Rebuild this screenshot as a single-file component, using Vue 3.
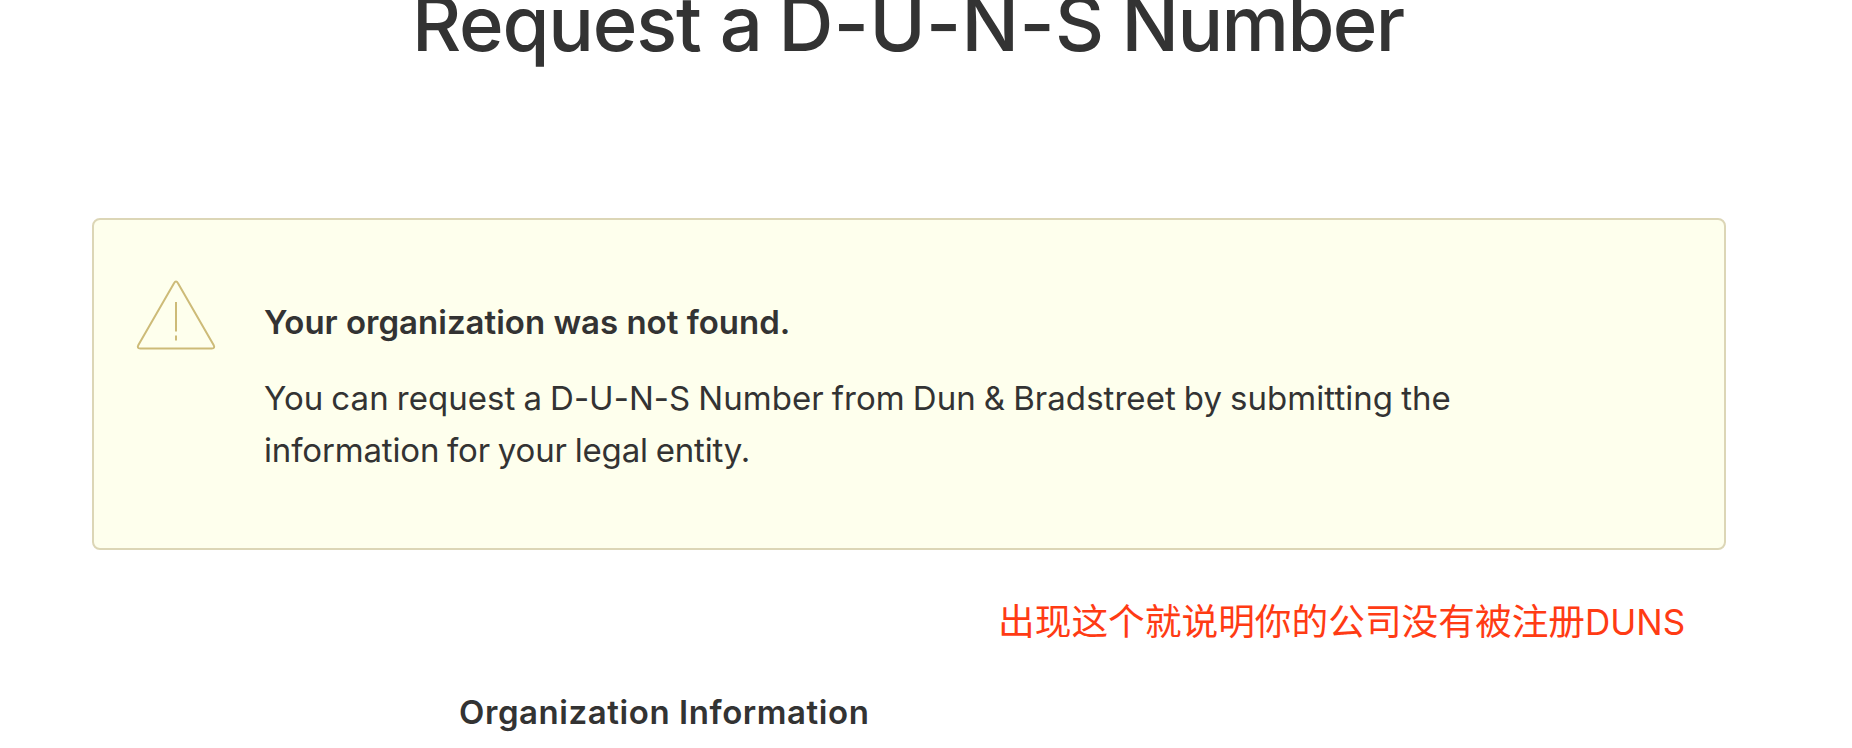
<template>
  <main class="page">
    <h1 class="title">
      <span class="title-verb">Request a</span>
      <span class="title-duns">D-U-N-S</span>
      <span class="title-noun">Number</span>
    </h1>

    <section class="alert">
      <svg class="alert-icon" viewBox="0 0 80 72" aria-hidden="true">
        <path
          d="M38 3.2Q40 0 42 3.2L77.6 65Q79.4 68.5 75.8 68.5H4.2Q0.6 68.5 2.4 65Z"
        />
        <path d="M40 22V51.5M40 55.5V60.5" />
      </svg>
      <div class="alert-text">
        <h2 class="alert-heading">{{ alert.heading }}</h2>
        <p v-for="line in alert.lines" :key="line" class="alert-line">
          {{ line }}
        </p>
      </div>
    </section>

    <p class="note"><span class="note-cjk">出现这个就说明你的公司没有被注册</span>DUNS</p>

    <h3 class="section-title">Organization Information</h3>
  </main>
</template>

<script setup>
const alert = {
  heading: "Your organization was not found.",
  lines: [
    "You can request a D-U-N-S Number from Dun & Bradstreet by submitting the",
    "information for your legal entity.",
  ],
};
</script>

<style>
body {
  margin: 0;
  background: #fff;
  overflow: hidden;
}
</style>

<style scoped>
.page {
  box-sizing: border-box;
  height: 748px;
  padding: 0 126px 0 92px;
  overflow: hidden;
  font-family: Inter, "Noto Sans CJK SC", sans-serif;
  color: #333;
}
h1,
h2,
h3,
p {
  margin: 0;
  white-space: nowrap;
}
.title {
  display: flex;
  gap: 17px;
  margin-top: -25px;
  padding-left: 320px;
  font-size: 76px;
  line-height: 96px;
  font-weight: 500;
}
.title-verb {
  letter-spacing: -1.2px;
}
.title-duns {
  letter-spacing: 0.4px;
}
.title-noun {
  letter-spacing: -1.6px;
}
.alert {
  box-sizing: border-box;
  display: flex;
  height: 332px;
  margin-top: 147px;
  padding: 60px 42px 0;
  border: 2px solid #dcd6b6;
  border-radius: 8px;
  background: #feffed;
}
.alert-icon {
  flex: none;
  width: 80px;
  height: 72px;
  fill: none;
  stroke: #cdbb78;
  stroke-width: 2;
}
.alert-text {
  padding: 16px 0 0 48px;
  font-size: 33px;
  line-height: 52px;
}
.alert-heading {
  margin-bottom: 24px;
  font-size: 33px;
  font-weight: 600;
}
.alert-line {
  letter-spacing: 0.05px;
  word-spacing: -1.3px;
}
.alert-line:last-child {
  letter-spacing: -0.16px;
}
.note {
  margin-top: 41px;
  padding-left: 906px;
  font-size: 35px;
  line-height: 56px;
  color: #ff3b14;
}
.note-cjk {
  font-family: "Noto Sans CJK SC", sans-serif;
  font-size: 36.7px;
  font-weight: 400;
}
.section-title {
  margin-top: 35px;
  padding-left: 367px;
  font-size: 33px;
  line-height: 54px;
  font-weight: 600;
  letter-spacing: 0.57px;
}
</style>
